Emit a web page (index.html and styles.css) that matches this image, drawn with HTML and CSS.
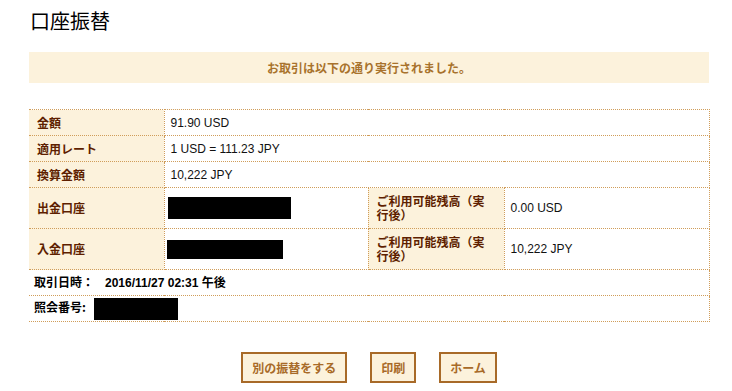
FILE: index.html
```html
<!DOCTYPE html>
<html lang="ja">
<head>
  <meta charset="UTF-8">
  <meta name="viewport" content="width=device-width, initial-scale=1.0">
  <title>口座振替</title>
  <link rel="stylesheet" href="styles.css">
</head>
<body>
  <div class="page">
    <h1>口座振替</h1>
    <div class="notice">お取引は以下の通り実行されました。</div>

    <table class="detail">
      <colgroup>
        <col class="c-label">
        <col class="c-value">
        <col class="c-label2">
        <col class="c-value2">
      </colgroup>
      <tr>
        <th>金額</th>
        <td colspan="3">91.90 USD</td>
      </tr>
      <tr>
        <th>適用レート</th>
        <td colspan="3">1 USD = 111.23 JPY</td>
      </tr>
      <tr>
        <th>換算金額</th>
        <td colspan="3">10,222 JPY</td>
      </tr>
      <tr class="tall">
        <th>出金口座</th>
        <td><span class="mask mask-out"></span></td>
        <th>ご利用可能残高（実行後）</th>
        <td>0.00 USD</td>
      </tr>
      <tr class="tall">
        <th>入金口座</th>
        <td><span class="mask mask-in"></span></td>
        <th>ご利用可能残高（実行後）</th>
        <td>10,222 JPY</td>
      </tr>
      <tr class="plain">
        <td colspan="4"><span class="k">取引日時：</span>2016/11/27 02:31 午後</td>
      </tr>
      <tr class="plain">
        <td colspan="4"><span class="k">照会番号:</span><span class="mask mask-ref"></span></td>
      </tr>
    </table>

    <div class="actions">
      <a href="#" class="btn">別の振替をする</a>
      <a href="#" class="btn">印刷</a>
      <a href="#" class="btn">ホーム</a>
    </div>
  </div>
</body>
</html>
```

FILE: styles.css
```css
* {
  margin: 0;
  padding: 0;
  box-sizing: border-box;
}

body {
  background: #fff;
  font-family: "Liberation Sans", "Noto Sans CJK JP", sans-serif;
  font-size: 12px;
  color: #111;
}

.page {
  width: 680px;
  margin-left: 29px;
  padding-top: 9px;
}

h1 {
  font-family: "Noto Sans CJK JP", sans-serif;
  font-size: 20px;
  font-weight: normal;
  line-height: 24px;
  color: #000;
  margin-left: 1px;
}

.notice {
  margin-top: 19px;
  height: 31px;
  line-height: 31px;
  background: #fcf2dc;
  color: #a8722c;
  text-align: center;
  font-family: "Noto Sans CJK JP", sans-serif;
  font-weight: bold;
  font-size: 12px;
}

.detail {
  margin-top: 26px;
  width: 680px;
  border-collapse: collapse;
  table-layout: fixed;
}

.c-label { width: 135px; }
.c-value { width: 204px; }
.c-label2 { width: 136px; }
.c-value2 { width: 205px; }

.detail th,
.detail td {
  border-top: 1px dotted #d09d5a;
  border-bottom: 1px dotted #d09d5a;
  border-right: 1px dotted #d09d5a;
  height: 26px;
  vertical-align: middle;
  text-align: left;
  line-height: 14px;
}

.detail th {
  background: #fcf2dc;
  color: #5e1f00;
  font-family: "Noto Sans CJK JP", sans-serif;
  font-weight: bold;
  padding: 0 8px;
}

.detail td {
  padding: 0 6px;
}

.detail tr.tall th,
.detail tr.tall td {
  height: 41px;
}

.detail tr.plain td {
  font-weight: bold;
  color: #000;
  padding-left: 5px;
}

.k {
  font-family: "Noto Sans CJK JP", sans-serif;
  margin-right: 11px;
}

.plain .k + .mask {
  margin-left: -3px;
}

.mask {
  display: inline-block;
  background: #000;
  vertical-align: middle;
}

.mask-out { width: 123px; height: 22px; margin-left: -3px; }
.mask-in { width: 116px; height: 19px; margin-left: -4px; }
.mask-ref { width: 84px; height: 22px; }

.actions {
  display: flex;
  justify-content: center;
  gap: 23px;
  margin-top: 30px;
}

.btn {
  display: block;
  height: 31px;
  line-height: 27px;
  padding: 0 9px;
  border: 2px solid #a86a28;
  background: #fcf2dc;
  color: #a86a28;
  font-family: "Noto Sans CJK JP", sans-serif;
  font-weight: bold;
  font-size: 12px;
  text-decoration: none;
}
```
